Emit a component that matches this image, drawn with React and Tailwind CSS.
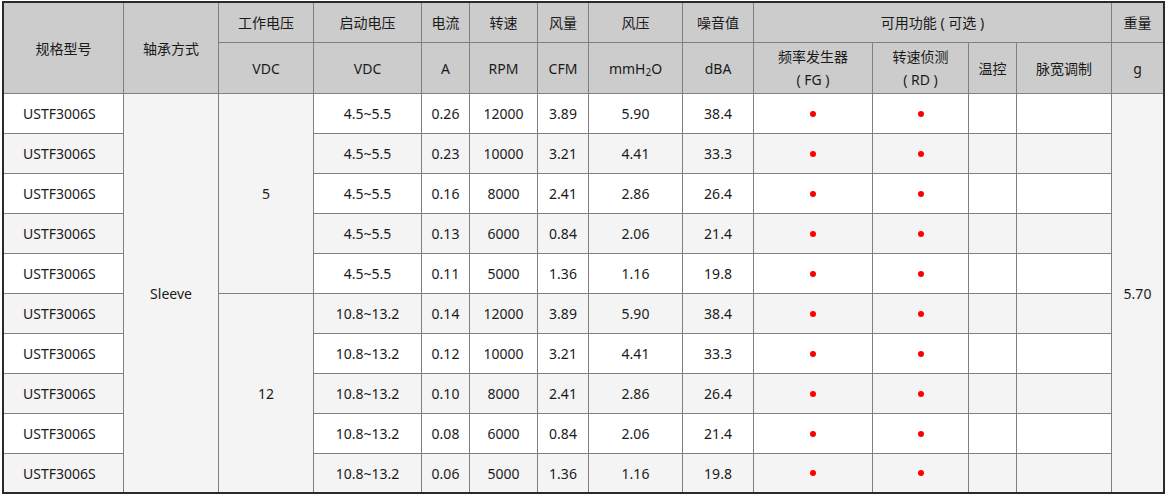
import React from 'react';

const cols =
  'grid-cols-[120px_95px_95px_108px_48px_68px_51px_94px_71px_119px_96px_48px_95px_51px]';

const rows = [
  { model: 'USTF3006S', start: '4.5~5.5', amp: '0.26', rpm: '12000', cfm: '3.89', pa: '5.90', db: '38.4' },
  { model: 'USTF3006S', start: '4.5~5.5', amp: '0.23', rpm: '10000', cfm: '3.21', pa: '4.41', db: '33.3' },
  { model: 'USTF3006S', start: '4.5~5.5', amp: '0.16', rpm: '8000', cfm: '2.41', pa: '2.86', db: '26.4' },
  { model: 'USTF3006S', start: '4.5~5.5', amp: '0.13', rpm: '6000', cfm: '0.84', pa: '2.06', db: '21.4' },
  { model: 'USTF3006S', start: '4.5~5.5', amp: '0.11', rpm: '5000', cfm: '1.36', pa: '1.16', db: '19.8' },
  { model: 'USTF3006S', start: '10.8~13.2', amp: '0.14', rpm: '12000', cfm: '3.89', pa: '5.90', db: '38.4' },
  { model: 'USTF3006S', start: '10.8~13.2', amp: '0.12', rpm: '10000', cfm: '3.21', pa: '4.41', db: '33.3' },
  { model: 'USTF3006S', start: '10.8~13.2', amp: '0.10', rpm: '8000', cfm: '2.41', pa: '2.86', db: '26.4' },
  { model: 'USTF3006S', start: '10.8~13.2', amp: '0.08', rpm: '6000', cfm: '0.84', pa: '2.06', db: '21.4' },
  { model: 'USTF3006S', start: '10.8~13.2', amp: '0.06', rpm: '5000', cfm: '1.36', pa: '1.16', db: '19.8' },
];

// one grid cell; right/bottom borders dropped where the dark frame takes over
const Cell = ({ children, className = '', last = false, bottom = false }) => (
  <div
    className={`flex items-center justify-center text-center border-[#808080] ${
      last ? '' : 'border-r'
    } ${bottom ? '' : 'border-b'} ${className}`}
  >
    {children}
  </div>
);

const Dot = () => <span className="block w-[6px] h-[6px] rounded-full bg-[#ff0000]" />;

export default function App() {
  const head = 'bg-[#cccccc]';
  return (
    <div className="w-[1168px] h-[496px] bg-white pt-px pl-[2px]">
      <div
        className="w-[1163px] border-2 border-[#2a2a2a] text-[14px] text-[#1a1a1a] leading-[23px]"
        style={{ fontFamily: '"Noto Sans", "Noto Sans CJK SC", sans-serif' }}
      >
        <div className={`grid ${cols} grid-rows-[40px_51px_repeat(9,40px)_38px]`}>
          {/* header row 1 */}
          <Cell className={`${head} row-span-2`}>规格型号</Cell>
          <Cell className={`${head} row-span-2`}>轴承方式</Cell>
          <Cell className={head}>工作电压</Cell>
          <Cell className={head}>启动电压</Cell>
          <Cell className={head}>电流</Cell>
          <Cell className={head}>转速</Cell>
          <Cell className={head}>风量</Cell>
          <Cell className={head}>风压</Cell>
          <Cell className={head}>噪音值</Cell>
          <Cell className={`${head} col-span-4`}>可用功能 ( 可选 )</Cell>
          <Cell className={head} last>
            重量
          </Cell>

          {/* header row 2 */}
          <Cell className={head}>VDC</Cell>
          <Cell className={head}>VDC</Cell>
          <Cell className={head}>A</Cell>
          <Cell className={head}>RPM</Cell>
          <Cell className={head}>CFM</Cell>
          <Cell className={head}>
            <span>
              mmH<sub className="text-[10px]">2</sub>O
            </span>
          </Cell>
          <Cell className={head}>dBA</Cell>
          <Cell className={`${head} flex-col`}>
            <span>频率发生器</span>
            <span>( FG )</span>
          </Cell>
          <Cell className={`${head} flex-col`}>
            <span>转速侦测</span>
            <span>( RD )</span>
          </Cell>
          <Cell className={head}>温控</Cell>
          <Cell className={head}>脉宽调制</Cell>
          <Cell className={head} last>
            g
          </Cell>

          {/* body */}
          {rows.map((r, i) => {
            const bg = i % 2 === 0 ? 'bg-white' : 'bg-[#f4f4f4]';
            const end = i === rows.length - 1;
            return (
              <React.Fragment key={i}>
                <Cell className={`${bg} justify-start pl-[19px]`} bottom={end}>
                  {r.model}
                </Cell>
                {i === 0 && (
                  <Cell className="bg-[#f4f4f4] row-span-10" bottom>
                    Sleeve
                  </Cell>
                )}
                {i === 0 && <Cell className="bg-[#f4f4f4] row-span-5">5</Cell>}
                {i === 5 && (
                  <Cell className="bg-[#f4f4f4] row-span-5" bottom>
                    12
                  </Cell>
                )}
                <Cell className={bg} bottom={end}>{r.start}</Cell>
                <Cell className={bg} bottom={end}>{r.amp}</Cell>
                <Cell className={bg} bottom={end}>{r.rpm}</Cell>
                <Cell className={bg} bottom={end}>{r.cfm}</Cell>
                <Cell className={bg} bottom={end}>{r.pa}</Cell>
                <Cell className={bg} bottom={end}>{r.db}</Cell>
                <Cell className={bg} bottom={end}>
                  <Dot />
                </Cell>
                <Cell className={bg} bottom={end}>
                  <Dot />
                </Cell>
                <Cell className={bg} bottom={end} />
                <Cell className={bg} bottom={end} />
                {i === 0 && (
                  <Cell className="bg-[#f4f4f4] row-span-10" last bottom>
                    5.70
                  </Cell>
                )}
              </React.Fragment>
            );
          })}
        </div>
      </div>
    </div>
  );
}
